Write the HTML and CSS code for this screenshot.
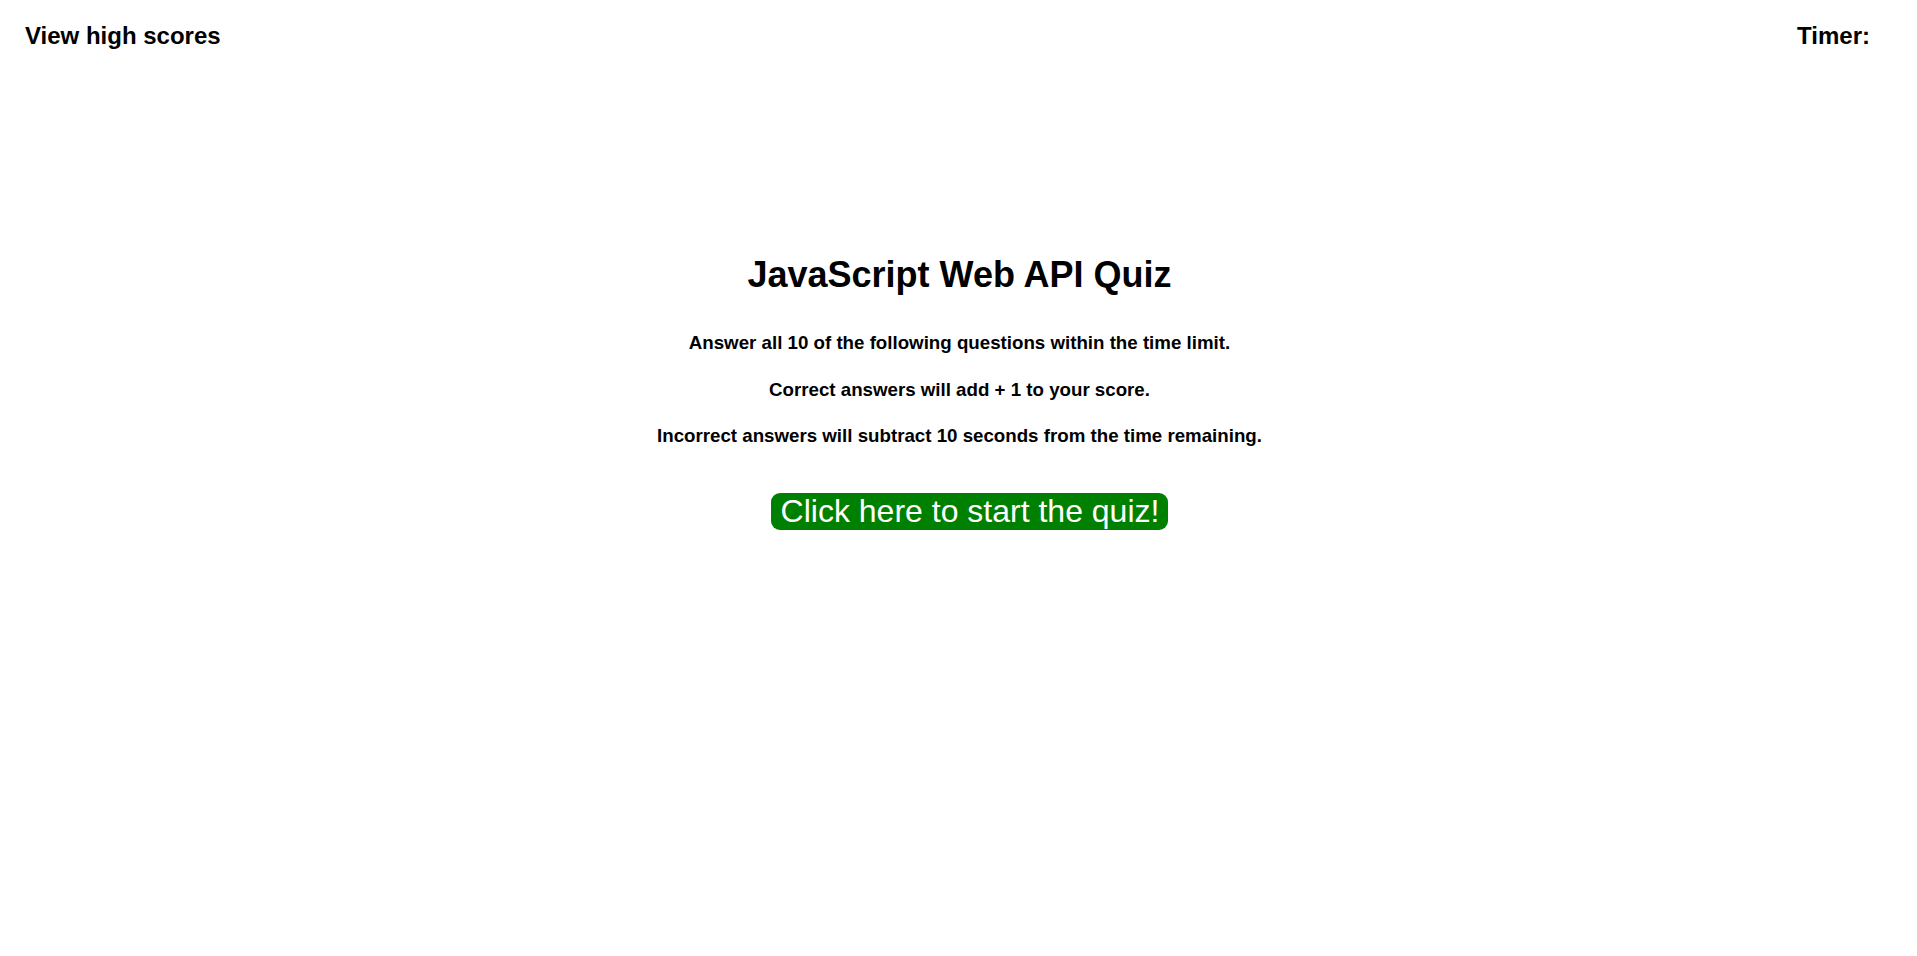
FILE: index.html
```html
<!DOCTYPE html>
<html lang="en">
<head>
<meta charset="utf-8">
<title>JavaScript Web API Quiz</title>
<link rel="stylesheet" href="styles.css">
</head>
<body>
<header class="top-bar">
  <a class="scores-link" href="#">View high scores</a>
  <div class="timer">Timer: <span class="time-left"></span></div>
</header>
<main class="intro">
  <h1 class="quiz-title">JavaScript Web API Quiz</h1>
  <div class="rules">
    <p class="rule">Answer all 10 of the following questions within the time limit.</p>
    <p class="rule">Correct answers will add + 1 to your score.</p>
    <p class="rule">Incorrect answers will subtract 10 seconds from the time remaining.</p>
  </div>
  <button class="start-btn" type="button">Click here to start the quiz!</button>
</main>
</body>
</html>
```
FILE: styles.css
```css
html, body {
  margin: 0;
  padding: 0;
  background: #ffffff;
  color: #000000;
  font-family: "Liberation Sans", Arial, sans-serif;
}

.top-bar {
  display: flex;
  justify-content: space-between;
  align-items: flex-start;
  padding: 22px 47px 0 25px;
  font-size: 24px;
  font-weight: bold;
  line-height: 27.6px;
}

.scores-link {
  color: #000000;
  text-decoration: none;
}

.timer {
  color: #000000;
}

.intro {
  display: flex;
  flex-direction: column;
  align-items: center;
  margin-top: 204px;
  padding-left: 2px;
}

.quiz-title {
  margin: 0;
  font-size: 36px;
  line-height: 41.4px;
  font-weight: bold;
}

.rules {
  display: flex;
  flex-direction: column;
  align-items: center;
  gap: 25.2px;
  margin-top: 37px;
}

.rule {
  margin: 0;
  font-size: 18.72px;
  line-height: 21.5px;
  font-weight: bold;
}

.start-btn {
  margin-top: 46px;
  margin-left: 20px;
  height: 37px;
  padding: 0 9px 0 10px;
  border: none;
  border-radius: 9px;
  background: #008000;
  color: #ffffff;
  font-family: "Liberation Sans", Arial, sans-serif;
  font-size: 32px;
  line-height: 37px;
  cursor: pointer;
}
```
